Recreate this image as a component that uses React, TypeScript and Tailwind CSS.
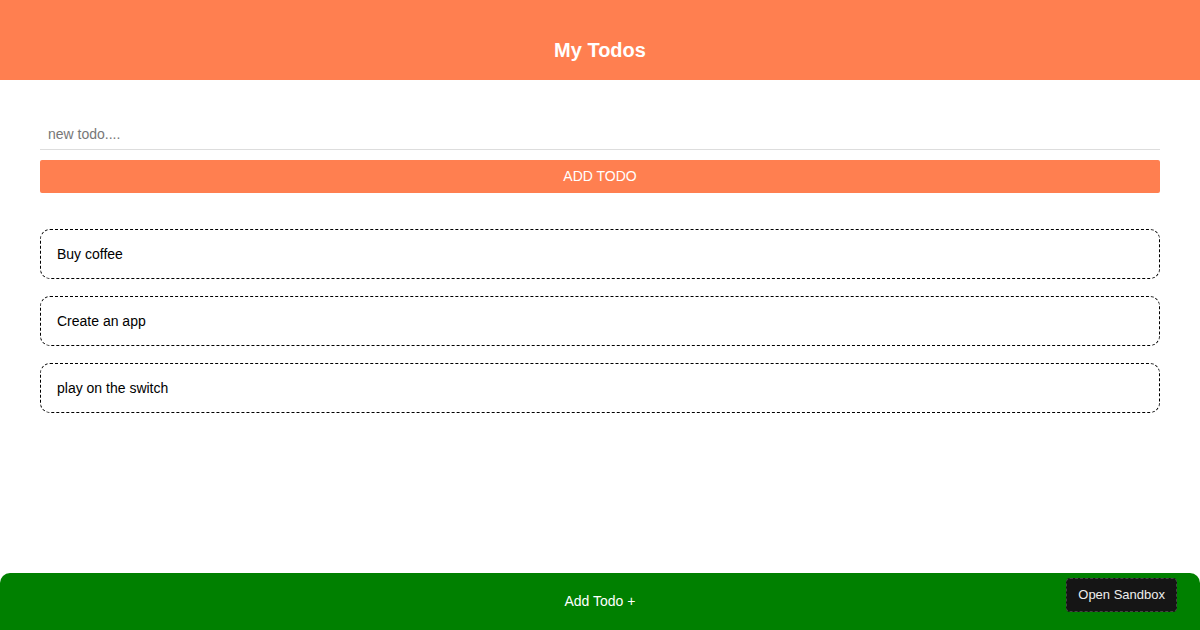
export default function App() {
  const todos = ["Buy coffee", "Create an app", "play on the switch"];

  return (
    <div className="relative flex h-[630px] flex-col bg-white font-['Liberation_Sans',Arial,sans-serif]">
      {/* Header */}
      <header className="flex h-[80px] shrink-0 items-end justify-center bg-[#ff7f50] pb-[20px]">
        <h1 className="text-[20px] font-bold leading-none text-white">My Todos</h1>
      </header>

      {/* Form */}
      <div className="flex flex-col px-[40px] pt-[38px]">
        <input
          placeholder="new todo...."
          className="h-[32px] border-b border-[#dddddd] px-[8px] text-[14px] text-black outline-none placeholder:text-[#777777]"
        />
        <button className="mt-[10px] h-[33px] rounded-[2px] bg-[#ff7f50] text-[14px] text-white">
          ADD TODO
        </button>
      </div>

      {/* List */}
      <ul className="mt-[36px] flex flex-col gap-[17px] px-[40px]">
        {todos.map((t) => (
          <li
            key={t}
            className="flex h-[50px] items-center rounded-[10px] border border-dashed border-black px-[16px] text-[14px] text-black"
          >
            {t}
          </li>
        ))}
      </ul>

      {/* Footer */}
      <footer className="mt-auto flex h-[57px] items-center justify-center rounded-t-[10px] bg-[#008000] text-[14px] text-white">
        Add Todo +
      </footer>

      <button className="absolute right-[23px] bottom-[18px] h-[34px] rounded-[4px] border border-dashed border-[#444444] bg-[#151515] px-[11px] text-[13px] text-[#eeeeee]">
        Open Sandbox
      </button>
    </div>
  );
}
